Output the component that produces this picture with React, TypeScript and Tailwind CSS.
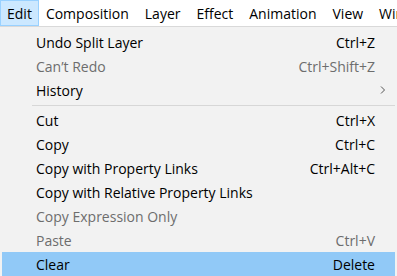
import React from "react";

const font = { fontFamily: '"Segoe UI", "Open Sans", "Noto Sans", sans-serif' };

type Item =
  | { sep: true }
  | { label: string; shortcut?: string; disabled?: boolean; sub?: boolean; active?: boolean; sep?: false };

const items: Item[] = [
  { label: "Undo Split Layer", shortcut: "Ctrl+Z" },
  { label: "Can\u2019t Redo", shortcut: "Ctrl+Shift+Z", disabled: true },
  { label: "History", sub: true },
  { sep: true },
  { label: "Cut", shortcut: "Ctrl+X" },
  { label: "Copy", shortcut: "Ctrl+C" },
  { label: "Copy with Property Links", shortcut: "Ctrl+Alt+C" },
  { label: "Copy with Relative Property Links" },
  { label: "Copy Expression Only", disabled: true },
  { label: "Paste", shortcut: "Ctrl+V", disabled: true },
  { label: "Clear", shortcut: "Delete", active: true },
];

const bar = ["Composition", "Layer", "Effect", "Animation", "View", "Window"];

export default function App() {
  return (
    <div className="w-[397px] h-[276px] overflow-hidden bg-[#f2f2f2] text-[14px] text-black" style={font}>
      <div className="flex h-[27px] bg-white border-b border-[#d9d9d9] whitespace-nowrap">
        <div className="h-[26px] px-[6px] flex items-center bg-[#cce8ff] border border-[#99d1ff]">Edit</div>
        {bar.map((b, i) => (
          <div key={b} className={"h-[26px] flex items-center " + (i === 0 ? "pl-[7px] pr-[8px]" : "px-[8px]")}>
            {b}
          </div>
        ))}
      </div>
      <div className="pt-[3px] px-[2px]">
        {items.map((it, i) =>
          it.sep ? (
            <div key={i} className="h-[6px] flex items-center pl-[30px]">
              <div className="h-px w-full bg-[#d7d7d7]" />
            </div>
          ) : (
            <div
              key={i}
              className={
                "h-[24px] flex items-center pl-[34px] pr-[20px] whitespace-nowrap " +
                (it.active ? "bg-[#91c9f7] " : "") +
                (it.disabled ? "text-[#6d6d6d]" : "text-black")
              }
            >
              <span className="flex-1">{it.label}</span>
              {it.shortcut && <span>{it.shortcut}</span>}
              {it.sub && (
                <svg width="8" height="10" viewBox="0 0 8 10" className="-mr-[12px]">
                  <path d="M2 1.5 L5.5 5 L2 8.5" fill="none" stroke="#555" strokeWidth="1" />
                </svg>
              )}
            </div>
          )
        )}
      </div>
    </div>
  );
}
